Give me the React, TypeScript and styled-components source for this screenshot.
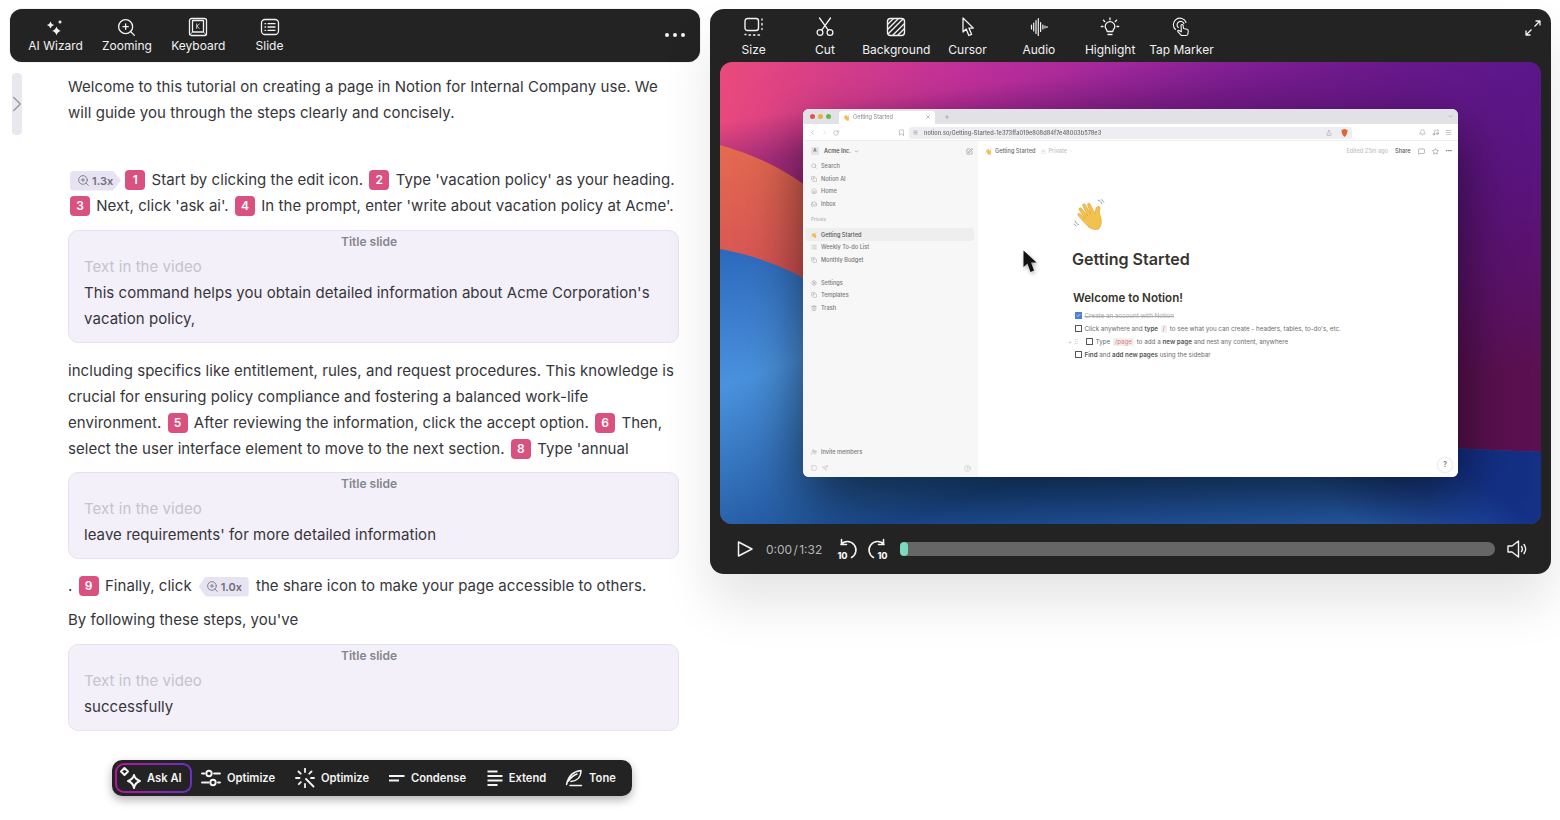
import React from 'react';
import styled, { createGlobalStyle, css } from 'styled-components';
import {
  Bell,
  Bookmark,
  Check,
  ChevronDown,
  ChevronLeft,
  ChevronRight,
  CircleHelp,
  Copy,
  Home,
  Inbox,
  List,
  Lock,
  Menu,
  MessageSquare,
  Music,
  Plus,
  RotateCw,
  Search,
  Send,
  Settings,
  Share,
  SlidersHorizontal,
  Square,
  SquarePen,
  Star,
  Trash2,
  UserPlus,
  X,
  ZoomIn,
} from 'lucide-react';

const GlobalStyle = createGlobalStyle`
  html, body {
    margin: 0;
    padding: 0;
    background: #fff;
    font-family: Inter, "Liberation Sans", sans-serif;
    overflow: hidden;
  }
  * { box-sizing: border-box; }
`;

const Page = styled.div`
  width: 1560px;
  height: 820px;
  display: flex;
  align-items: flex-start;
  padding: 9px 0 0 10px;
  gap: 10px;
`;

const LeftColumn = styled.section`
  width: 690px;
  display: flex;
  flex-direction: column;
`;

const DarkBar = styled.div`
  background: #232323;
  border-radius: 12px;
  height: 53px;
  display: flex;
  align-items: flex-start;
  padding: 8px 10px 0;
  box-shadow: 0 0 1px rgba(0, 0, 0, 0.5);
`;

const ToolItem = styled.div<{ $labelGap?: number }>`
  width: 71.3px;
  display: flex;
  flex-direction: column;
  align-items: center;
  gap: ${(p) => p.$labelGap ?? 1}px;
  color: #f2f2f2;
  font-size: 12px;
  line-height: 16px;
  white-space: nowrap;
  svg { display: block; }
`;

const IconSlot = styled.div`
  height: 20px;
  display: flex;
  align-items: center;
  justify-content: center;
`;

const MoreDots = styled.div`
  margin-left: auto;
  margin-right: 5px;
  margin-top: 16px;
  display: flex;
  gap: 4px;
  span {
    width: 4px;
    height: 4px;
    border-radius: 50%;
    background: #f2f2f2;
  }
`;

const ContentRow = styled.div`
  display: flex;
  gap: 46px;
  padding: 11px 0 0 2px;
`;

const Handle = styled.div`
  width: 10px;
  height: 62px;
  flex: none;
  background: #e8e9ef;
  border-radius: 4px;
  display: flex;
  align-items: center;
  justify-content: center;
  color: #94949b;
  svg { flex: none; }
`;

const TextColumn = styled.div`
  width: 611px;
  padding-top: 1px;
  color: #36363a;
  font-size: 15px;
  line-height: 26px;
  letter-spacing: 0.05px;
`;

const Para = styled.p<{ $top?: number }>`
  margin: ${(p) => p.$top ?? 0}px 0 0;
  white-space: nowrap;
`;

const Step = styled.span`
  display: inline-flex;
  align-items: center;
  justify-content: center;
  width: 20px;
  height: 20px;
  margin: -3px 2px;
  border-radius: 4px;
  background: #d9527f;
  color: #fff;
  font-size: 12px;
  font-weight: 600;
  line-height: 20px;
  vertical-align: 1px;
  letter-spacing: 0;
`;

const ZoomTag = styled.span<{ $dir: 'left' | 'right' }>`
  display: inline-flex;
  align-items: center;
  gap: 2px;
  height: 20px;
  background: #e7e3f3;
  color: #6f6f78;
  font-size: 11px;
  font-weight: 600;
  line-height: 20px;
  vertical-align: -2px;
  letter-spacing: 0;
  ${(p) =>
    p.$dir === 'right'
      ? css`
          width: 51px;
          padding-left: 7px;
          margin: -3px -2px -3px 2px;
          border-radius: 4px 0 0 4px;
          clip-path: polygon(0 0, 43px 0, 100% 50%, 43px 100%, 0 100%);
        `
      : css`
          width: 50px;
          padding-left: 7px;
          margin: -3px 3px -3px 7px;
          border-radius: 0 4px 4px 0;
          clip-path: polygon(7px 0, 100% 0, 100% 100%, 7px 100%, 0 50%);
        `}
`;

const SlideCard = styled.div<{ $top?: number }>`
  margin-top: ${(p) => p.$top ?? 11}px;
  padding: 0 15px 10px;
  background: #f3f0fa;
  border: 1px solid #e5e1f1;
  border-radius: 10px;
`;

const CardTitle = styled.div`
  text-align: center;
  padding-right: 9px;
  color: #85858c;
  font-size: 12px;
  font-weight: 600;
  line-height: 22px;
  letter-spacing: 0;
`;

const CardHint = styled.div`
  color: #c4c4c9;
  margin-top: 1px;
`;

const FloatingBar = styled.div`
  align-self: flex-start;
  margin: 29px 0 0 102px;
  width: 520px;
  height: 36px;
  background: #232323;
  border-radius: 10px;
  box-shadow: 0 4px 10px rgba(0, 0, 0, 0.3);
  display: flex;
  align-items: center;
  padding: 0 3px;
  color: #f4f4f4;
  font-size: 11.2px;
  font-weight: 600;
  letter-spacing: 0;
`;

const AskButton = styled.div`
  width: 77px;
  height: 30px;
  border: 2px solid transparent;
  border-radius: 9px;
  background: linear-gradient(#232323, #232323) padding-box,
    linear-gradient(90deg, #b5179e, #6d2fc4) border-box;
  display: flex;
  align-items: center;
  gap: 4px;
  padding-left: 2px;
  flex: none;
`;

const FloatAction = styled.div<{ $w: number }>`
  width: ${(p) => p.$w}px;
  flex: none;
  display: flex;
  align-items: center;
  justify-content: center;
  gap: 6px;
  white-space: nowrap;
`;

const PlayerPanel = styled.section`
  width: 841px;
  height: 565px;
  background: #232323;
  border-radius: 14px;
  display: flex;
  flex-direction: column;
  box-shadow: 0 30px 50px rgba(0, 0, 0, 0.1);
`;

const PlayerTop = styled.div`
  height: 53px;
  display: flex;
  align-items: flex-start;
  padding: 8px 10px 0 8px;
  flex: none;
`;

const ExpandCorner = styled.div`
  margin-left: auto;
  margin-top: 3px;
  color: #f2f2f2;
`;

const VideoFrame = styled.div`
  position: relative;
  height: 462px;
  flex: none;
  margin: 0 10px;
  border-radius: 12px;
  overflow: hidden;
  padding: 47px 83px;
  svg.wall {
    position: absolute;
    inset: 0;
  }
`;

const BrowserWindow = styled.div`
  position: relative;
  height: 368px;
  border-radius: 6px;
  overflow: hidden;
  background: #fff;
  box-shadow: 0 24px 60px rgba(0, 0, 0, 0.6);
  color: #6c6c6c;
  font-size: 5.6px;
  line-height: 8px;
  letter-spacing: 0;
  filter: blur(0.25px);
  display: flex;
  flex-direction: column;
`;

const TabStrip = styled.div`
  height: 15px;
  flex: none;
  background: #e2e2e6;
  display: flex;
  align-items: center;
  padding: 0 5px 0 7px;
  gap: 3px;
`;

const Light = styled.i<{ $c: string }>`
  width: 5px;
  height: 5px;
  border-radius: 50%;
  background: ${(p) => p.$c};
`;

const BrowserTab = styled.div`
  width: 96px;
  height: 13px;
  margin: 1px 6px 0 5px;
  background: #fff;
  border-radius: 3px 3px 0 0;
  display: flex;
  align-items: center;
  gap: 3px;
  padding: 0 4px;
  color: #888;
  svg:last-child { margin-left: auto; color: #555; }
`;

const UrlRow = styled.div`
  height: 17px;
  flex: none;
  background: #fff;
  border-bottom: 1px solid #eee;
  display: flex;
  align-items: center;
  padding: 1px 6px 0;
  color: #777;
`;

const NavIcons = styled.div`
  width: 100px;
  display: flex;
  align-items: center;
  gap: 5px;
  flex: none;
  svg:last-child { margin-left: auto; margin-right: 4px; }
`;

const UrlField = styled.div`
  width: 443px;
  height: 12px;
  background: #eeeef2;
  border-radius: 3px;
  display: flex;
  align-items: center;
  gap: 6px;
  padding: 0 4px;
  font-weight: 600;
  color: #777;
  svg:nth-of-type(2) { margin-left: auto; margin-right: 3px; }
`;

const BrowserRight = styled.div`
  margin-left: auto;
  display: flex;
  gap: 6px;
`;

const NotionArea = styled.div`
  flex: 1;
  display: flex;
  min-height: 0;
`;

const NotionSide = styled.aside`
  width: 175px;
  flex: none;
  background: #f7f7f7;
  padding: 3px 4px 2px 2px;
  display: flex;
  flex-direction: column;
`;

const SideRow = styled.div<{ $active?: boolean; $strong?: boolean }>`
  height: 12.7px;
  flex: none;
  display: flex;
  align-items: center;
  gap: 4px;
  padding-left: 6px;
  border-radius: 3px;
  font-weight: 500;
  color: ${(p) => (p.$strong ? '#555' : '#777')};
  background: ${(p) => (p.$active ? '#eeeeee' : 'transparent')};
  svg { flex: none; color: #888; }
`;

const SideLabel = styled.div`
  margin: 6px 0 0 6px;
  height: 12px;
  font-size: 4.6px;
  color: #aaa;
`;

const SideHead = styled.div`
  height: 14px;
  flex: none;
  display: flex;
  align-items: center;
  gap: 3px;
  padding-left: 6px;
  color: #555;
  font-weight: 600;
  margin-bottom: 1.6px;
  svg:last-child { margin-left: auto; margin-right: 1px; color: #555; }
`;

const AcmeMark = styled.span`
  width: 8px;
  height: 8px;
  margin-right: 2px;
  border-radius: 1px;
  background: #e5e5e5;
  color: #666;
  text-align: center;
  font-size: 4.5px;
`;

const SideGap = styled.div<{ $h?: number }>`
  flex: ${(p) => (p.$h ? 'none' : 1)};
  height: ${(p) => p.$h ?? 0}px;
`;

const SideFoot = styled.div`
  height: 14px;
  flex: none;
  display: flex;
  align-items: center;
  gap: 5px;
  padding: 0 3px 0 6px;
  color: #aaa;
  svg:last-child { margin-left: auto; }
`;

const NotionMain = styled.main`
  position: relative;
  flex: 1;
  background: #fff;
  display: flex;
  flex-direction: column;
`;

const NotionHeader = styled.div`
  height: 20px;
  flex: none;
  display: flex;
  align-items: center;
  padding: 0 6px 0 7px;
  gap: 3px;
  font-weight: 500;
  svg { flex: none; }
`;

const Muted = styled.span`
  color: #c2c2c2;
  display: inline-flex;
  align-items: center;
  gap: 2px;
  margin-left: 3px;
`;

const HeaderRight = styled.div`
  margin-left: auto;
  display: flex;
  align-items: center;
  gap: 7px;
  color: #555;
`;

const TinyDots = styled.span`
  font-size: 4px;
`;

const Doc = styled.article`
  padding: 37px 0 0 95px;
  color: #6a6a6a;
  font-size: 6.25px;
`;

const DocTitle = styled.h1`
  margin: 16px 0 0 -1px;
  font-size: 16.1px;
  line-height: 24px;
  font-weight: 600;
  color: #37352f;
`;

const DocHeading = styled.h2`
  margin: 19px 0 3px;
  font-size: 11.6px;
  line-height: 16px;
  font-weight: 600;
  color: #37352f;
`;

const Todo = styled.div<{ $indent?: boolean; $done?: boolean }>`
  position: relative;
  height: 13px;
  display: flex;
  align-items: center;
  gap: 3px;
  margin-left: ${(p) => (p.$indent ? 13 : 2)}px;
  white-space: nowrap;
  color: ${(p) => (p.$done ? '#aaa' : '#6a6a6a')};
  text-decoration: ${(p) => (p.$done ? 'line-through' : 'none')};
  b { font-weight: 600; color: #555; }
`;

const TodoBox = styled.span<{ $checked?: boolean }>`
  width: 6.5px;
  height: 6.5px;
  flex: none;
  display: flex;
  align-items: center;
  justify-content: center;
  color: #fff;
  border: 0.8px solid ${(p) => (p.$checked ? '#4a7fd6' : '#555')};
  border-radius: 0.5px;
  background: ${(p) => (p.$checked ? '#4a7fd6' : 'transparent')};
  svg { flex: none; }
`;

const Code = styled.span`
  background: #f1f1ef;
  color: #d77;
  padding: 0 2px;
  border-radius: 1px;
  margin: 0 1px;
`;

const RowGrip = styled.span`
  position: absolute;
  left: -18px;
  color: #bbb;
  font-size: 6px;
`;

const HelpBubble = styled.div`
  position: absolute;
  right: 6px;
  bottom: 5px;
  width: 14px;
  height: 14px;
  border-radius: 50%;
  background: #fff;
  box-shadow: 0 0 3px rgba(0, 0, 0, 0.2);
  text-align: center;
  font-size: 7px;
  line-height: 14px;
  color: #444;
`;

const CursorMark = styled.svg`
  position: absolute;
  left: 45px;
  top: 109px;
  filter: drop-shadow(1px 2px 2px rgba(0, 0, 0, 0.35));
`;

const Controls = styled.div`
  flex: 1;
  display: flex;
  align-items: center;
  padding: 0 24px 0 26px;
  color: #f2f2f2;
  svg { flex: none; }
`;

const TimeText = styled.span`
  margin: 0 13px 0 12px;
  font-size: 12px;
  color: #b5b5b5;
  width: 56px;
  white-space: nowrap;
  word-spacing: -2px;
`;

const SkipGap = styled.span`
  width: 7px;
  flex: none;
`;

const Track = styled.div`
  flex: 1;
  height: 14px;
  margin: 0 12px 0 10px;
  border-radius: 7px;
  background: #666;
`;

const TrackFill = styled.div`
  height: 100%;
  border-radius: 4px;
  background: #7dd9c0;
`;

/* ---- drawings ---- */

const stroke = {
  fill: 'none',
  stroke: 'currentColor',
  strokeWidth: 1.5,
  strokeLinecap: 'round' as const,
  strokeLinejoin: 'round' as const,
};

const Sparkle = ({ cx, cy, r }: { cx: number; cy: number; r: number }) => (
  <path
    d={`M${cx} ${cy - r}Q${cx + r * 0.2} ${cy - r * 0.2} ${cx + r} ${cy}Q${cx + r * 0.2} ${cy + r * 0.2} ${cx} ${cy + r}Q${cx - r * 0.2} ${cy + r * 0.2} ${cx - r} ${cy}Q${cx - r * 0.2} ${cy - r * 0.2} ${cx} ${cy - r}Z`}
    fill="currentColor"
  />
);

const WizardIcon = () => (
  <svg width="20" height="20" viewBox="0 0 20 20">
    <Sparkle cx={4.5} cy={8} r={3.6} />
    <Sparkle cx={10.5} cy={14} r={4.4} />
    <Sparkle cx={14} cy={5} r={2.2} />
  </svg>
);

const KeyboardIcon = () => (
  <svg width="20" height="20" viewBox="0 0 20 20" {...stroke} strokeWidth={1.3}>
    <rect x="1.5" y="1.5" width="17" height="17" rx="2" />
    <rect x="4.5" y="3.5" width="11" height="11.5" rx="0.5" />
    <path d="M1.8 18l2.7-3M18.2 18l-2.7-3M8.7 7v4.4M11.3 7L8.9 9.2l2.4 2.2" strokeWidth={0.8} />
  </svg>
);

const SlideIcon = () => (
  <svg width="20" height="20" viewBox="0 0 20 20" {...stroke} strokeWidth={1.3}>
    <rect x="1.5" y="2.5" width="17" height="15" rx="3.5" />
    <path d="M5 6.7h.6M5 10h.6M5 13.3h.6M8 6.7h7M8 10h7M8 13.3h7" />
  </svg>
);

const SizeIcon = () => (
  <svg width="20" height="20" viewBox="0 0 20 20" {...stroke} strokeWidth={1.4}>
    <rect x="1" y="1.5" width="13.5" height="12" rx="2.5" />
    <path d="M18 2v1M18 6.5v1.5M18 11.5v1M1 17.5h1M5 18h1.5M9.5 18h1.5M14 18h1.5" />
  </svg>
);

const CutIcon = () => (
  <svg width="20" height="20" viewBox="0 0 20 20" {...stroke} strokeWidth={1.3}>
    <circle cx="5" cy="15.5" r="2.9" />
    <circle cx="15" cy="15.5" r="2.9" />
    <path d="M6.7 13.2L15.5 1M13.3 13.2L4.5 1" />
  </svg>
);

const BackgroundIcon = () => (
  <svg width="20" height="20" viewBox="0 0 20 20" {...stroke} strokeWidth={1.4}>
    <rect x="1.5" y="1.5" width="17" height="17" rx="3" />
    <path d="M2 7L7 2M2 12L12 2M2.5 16.5L16.5 2.5M7 18L18 7M12 18l6-6" />
  </svg>
);

const CursorIcon = () => (
  <svg width="20" height="20" viewBox="0 0 20 20" {...stroke} strokeWidth={1.3}>
    <path d="M5 1v14l3.200-3 2.600 6.500 2.800-1.200-2.700-6.200h4.500L5 1z" />
  </svg>
);

const AudioIcon = () => (
  <svg width="20" height="20" viewBox="0 0 20 20" {...stroke} strokeWidth={1.2}>
    <path d="M2.500 8v4M4.700 6v8M7 3.500v13M9.300 1.500v17M11.600 5.500v9M13.900 8v4M16 9v2M18 9.500v1" />
  </svg>
);

const BulbIcon = () => (
  <svg width="20" height="20" viewBox="0 0 20 20" {...stroke} strokeWidth={1.3}>
    <path d="M7.200 14.500c0-2-2-2.700-2-5a4.800 4.800 0 019.600 0c0 2.300-2 3-2 5h-5.600zM8 17.500h4M10 1v1.800M3.400 3.200l1.300 1.300M16.600 3.200l-1.300 1.300M1.300 9.500h1.700M17 9.500h1.700" />
  </svg>
);

const TapIcon = () => (
  <svg width="20" height="20" viewBox="0 0 20 20" {...stroke} strokeWidth={1.1}>
    <path d="M4.500 12.500a6.500 6.500 0 1 1 10.500-7M7.300 10.500a3.500 3.500 0 1 1 5.600-3.800" />
    <path d="M10 8.300a1.100 1.100 0 012.100 0l.4 3.200 3.500.7c1 .3 1.500 1 1.300 2l-.5 3c-.2.900-.9 1.300-1.700 1.300h-3.800c-.6 0-1.100-.2-1.500-.7L6.800 14.700c-.5-.7.300-1.700 1.200-1.200l2.400 1.300z" />
  </svg>
);

const ExpandIcon = () => (
  <svg width="16" height="16" viewBox="0 0 16 16" {...stroke} strokeWidth={1.3} strokeLinecap="butt">
    <path d="M9.500 6.500L15 1M10.500 1H15v4.500M6.500 9.500L1 15M1 10.500V15h4.500" />
  </svg>
);

const AskIcon = () => (
  <svg width="24" height="24" viewBox="0 0 24 24" {...stroke} strokeWidth={2}>
    <path d="M5.500 2L9 5.500 5.500 9 2 5.500z" />
    <path d="M15 9c.6 3 2 4.500 6 6-4 1.500-5.400 3-6 7-.6-4-2-5.500-6-7 4-1.500 5.400-3 6-6z" />
  </svg>
);

const SliderIcon = () => (
  <svg width="20" height="20" viewBox="0 0 20 20" {...stroke} strokeWidth={1.9}>
    <circle cx="8" cy="5.500" r="2.700" />
    <circle cx="12" cy="14.500" r="2.700" />
    <path d="M1 5.500h2.500M13 5.500h6M1 14.500h6.500M17 14.500h2" />
  </svg>
);

const RaysIcon = () => (
  <svg width="20" height="20" viewBox="0 0 20 20" {...stroke} strokeWidth={1.8}>
    <path d="M10 0.500v3.500M10 16v3.500M1 10h3.500M16 10h3M3.500 3.500l2.200 2.200M16.500 3.500l-2.200 2.200M3.800 16.200l2-2M11 11l7.500 7.500" />
  </svg>
);

const CondenseIcon = () => (
  <svg width="16" height="16" viewBox="0 0 16 16" {...stroke} strokeWidth={1.8} strokeLinecap="butt">
    <path d="M0 6h15.500M0 10.500h10" />
  </svg>
);

const ExtendIcon = () => (
  <svg width="16" height="16" viewBox="0 0 16 16" {...stroke} strokeWidth={1.8} strokeLinecap="butt">
    <path d="M0.500 1.500h10M0.500 6h15M0.500 10.500h15M0.500 15h10" />
  </svg>
);

const FeatherIcon = () => (
  <svg width="18" height="18" viewBox="0 0 18 18" {...stroke} strokeWidth={1.5}>
    <path d="M1.500 15.500C3 8 7 2.500 16 1.500 16 8 12 12 6 12.500M3.500 12C6 8.500 9 6 12 5M5 16.500h11.500" />
  </svg>
);

const PlayIcon = () => (
  <svg width="18" height="18" viewBox="0 0 18 18" {...stroke} strokeWidth={1.5}>
    <path d="M2.500 2L16 9 2.500 16z" />
  </svg>
);

const SkipIcon = ({ flip }: { flip?: boolean }) => (
  <svg width="24" height="24" viewBox="0 0 24 24" fill="none">
    <g {...stroke} strokeWidth={1.6} transform={flip ? 'matrix(-1 0 0 1 24 0)' : undefined}>
      <path d="M6 7.500a8.500 8.500 0 1 1 10.500 13M6.500 2.500v5h5" />
    </g>
    <text
      x={flip ? 16.5 : 7.5}
      y="22"
      fontSize="9"
      fontWeight="800"
      fill="currentColor"
      textAnchor="middle"
      fontFamily="Inter, sans-serif"
    >
      10
    </text>
  </svg>
);

const VolumeIcon = () => (
  <svg width="20" height="20" viewBox="0 0 20 20" {...stroke} strokeWidth={1.4}>
    <path d="M1 7v6h4l6.500 5V2L5 7z" />
    <path d="M14.500 7.500c1 1.500 1 3.500 0 5M17 5.500c2 2.700 2 6.300 0 9" />
  </svg>
);

const WaveHand = ({ size }: { size: number }) => (
  <svg width={size} height={size} viewBox="0 0 32 32" style={{ display: 'block', flex: 'none' }}>
    <path
      d="M25 30c-5 1.500-9-.5-12-4L5 17c-1-1.200.6-2.800 1.900-1.700l5 4.700L6 11.500c-.9-1.300.8-2.800 2-1.600l6.300 7.600L9.500 7.500c-.7-1.500 1.200-2.500 2.200-1.300l5.300 9-2.800-8.500c-.4-1.500 1.500-2.300 2.300-1l4.500 9 1-3.500c.4-2.700 3-3.800 4-2.500.5 1-.4 3-.4 5 0 3 2.300 5 1.800 10-.3 3-1.400 5.700-2.600 6.300z"
      fill="#f2c14e"
      stroke="#d9a033"
      strokeWidth="0.6"
    />
    <path d="M24 2c2 .6 3.500 2 4.200 4M27 1.500c1.500.6 2.500 1.600 3 3M2 22c.5 1.800 1.800 3.300 3.800 4M1 25c.6 1 1.400 1.800 2.500 2.300" fill="none" stroke="#888" strokeWidth="0.8" />
  </svg>
);

const Wallpaper = () => (
  <svg className="wall" width="822" height="462" viewBox="0 0 822 462" preserveAspectRatio="none">
    <defs>
      <linearGradient id="topGrad" x1="0" y1="0" x2="1" y2="0.1">
        <stop offset="0" stopColor="#ea4a7c" />
        <stop offset="0.3" stopColor="#c0309a" />
        <stop offset="0.62" stopColor="#8a229c" />
        <stop offset="1" stopColor="#5a1c9e" />
      </linearGradient>
      <linearGradient id="topShade" gradientUnits="userSpaceOnUse" x1="420" y1="0" x2="480" y2="420">
        <stop offset="0" stopColor="#5a1070" stopOpacity="0" />
        <stop offset="0.1" stopColor="#5a1070" stopOpacity="0.4" />
        <stop offset="0.4" stopColor="#5a1070" stopOpacity="0.7" />
        <stop offset="0.85" stopColor="#5a0f48" stopOpacity="0.9" />
      </linearGradient>
      <linearGradient id="orange" x1="0" y1="0" x2="0" y2="1">
        <stop offset="0" stopColor="#e46a50" />
        <stop offset="1" stopColor="#cf4658" />
      </linearGradient>
      <linearGradient id="blue" x1="0" y1="0" x2="1" y2="1">
        <stop offset="0" stopColor="#2c68bc" />
        <stop offset="0.25" stopColor="#4a92de" />
        <stop offset="0.6" stopColor="#1c4f96" />
        <stop offset="1" stopColor="#2c66ba" />
      </linearGradient>
      <linearGradient id="blueShade" gradientUnits="userSpaceOnUse" x1="720" y1="385" x2="650" y2="470">
        <stop offset="0" stopColor="#10287e" stopOpacity="0.85" />
        <stop offset="1" stopColor="#10287e" stopOpacity="0" />
      </linearGradient>
    </defs>
    <rect width="822" height="462" fill="url(#topGrad)" />
    <rect width="822" height="462" fill="url(#topShade)" />
    <path d="M0 83C50 97 90 120 140 170L280 300H0z" fill="url(#orange)" />
    <path d="M0 187C60 198 110 225 180 280C300 360 560 380 821 390V462H0z" fill="url(#blue)" />
    <path d="M0 187C60 198 110 225 180 280C300 360 560 380 821 390V462H0z" fill="url(#blueShade)" />
  </svg>
);

const i5 = { size: 6, strokeWidth: 1.5 };
const i7 = { size: 7, strokeWidth: 1.4 };

function NotionWindow() {
  return (
    <BrowserWindow>
      <TabStrip>
        <Light $c="#e0554d" />
        <Light $c="#e9b23f" />
        <Light $c="#62b84f" />
        <BrowserTab>
          <WaveHand size={7} />
          Getting Started
          <X {...i5} />
        </BrowserTab>
        <Plus size={6} strokeWidth={1.5} color="#777" />
        <ChevronDown size={5} style={{ marginLeft: 'auto' }} color="#777" />
      </TabStrip>
      <UrlRow>
        <NavIcons>
          <ChevronLeft {...i7} />
          <ChevronRight {...i7} color="#bbb" />
          <RotateCw {...i5} />
          <Bookmark {...i7} />
        </NavIcons>
        <UrlField>
          <SlidersHorizontal size={5} strokeWidth={1.5} />
          notion.so/Getting-Started-1e373ffa019e808d84f7e48003b578e3
          <Share size={6} strokeWidth={1.5} />
          <svg width="7" height="8" viewBox="0 0 7 8">
            <path d="M0.500 1L3.500 0 6.500 1C6.500 4 5.500 6.500 3.500 8 1.500 6.500 .5 4 .5 1z" fill="#e2642f" />
          </svg>
        </UrlField>
        <BrowserRight>
          <Bell {...i7} />
          <Music {...i7} />
          <Menu {...i7} />
        </BrowserRight>
      </UrlRow>
      <NotionArea>
        <NotionSide>
          <SideHead>
            <AcmeMark>A</AcmeMark>
            Acme Inc.
            <ChevronDown size={5} />
            <SquarePen {...i7} />
          </SideHead>
          <SideRow><Search {...i5} />Search</SideRow>
          <SideRow><Copy {...i5} />Notion AI</SideRow>
          <SideRow><Home {...i5} />Home</SideRow>
          <SideRow><Inbox {...i5} />Inbox</SideRow>
          <SideLabel>Private</SideLabel>
          <SideRow $active $strong><WaveHand size={6} />Getting Started</SideRow>
          <SideRow><List {...i5} />Weekly To-do List</SideRow>
          <SideRow><Copy {...i5} />Monthly Budget</SideRow>
          <SideGap $h={10} />
          <SideRow><Settings {...i5} />Settings</SideRow>
          <SideRow><Copy {...i5} />Templates</SideRow>
          <SideRow><Trash2 {...i5} />Trash</SideRow>
          <SideGap />
          <SideRow><UserPlus {...i5} />Invite members</SideRow>
          <SideGap $h={3} />
          <SideFoot>
            <Square {...i5} />
            <Send {...i5} />
            <CircleHelp {...i7} />
          </SideFoot>
        </NotionSide>
        <NotionMain>
          <NotionHeader>
            <WaveHand size={7} />
            Getting Started
            <Muted><Lock size={5} strokeWidth={1.5} />Private<ChevronDown size={4} /></Muted>
            <HeaderRight>
              <Muted>Edited 25m ago</Muted>
              <span>Share</span>
              <MessageSquare {...i7} />
              <Star {...i7} />
              <TinyDots>•••</TinyDots>
            </HeaderRight>
          </NotionHeader>
          <Doc>
            <WaveHand size={33} />
            <DocTitle>Getting Started</DocTitle>
            <DocHeading>Welcome to Notion!</DocHeading>
            <Todo $done>
              <TodoBox $checked><Check size={5} strokeWidth={3} /></TodoBox>
              Create an account with Notion
            </Todo>
            <Todo>
              <TodoBox />
              <span>Click anywhere and <b>type</b> <Code>/</Code> to see what you can create - headers, tables, to-do's, etc.</span>
            </Todo>
            <Todo $indent>
              <RowGrip>+ ⠿</RowGrip>
              <TodoBox />
              <span>Type <Code>/page</Code> to add a <b>new page</b> and nest any content, anywhere</span>
            </Todo>
            <Todo>
              <TodoBox />
              <span><b>Find</b> and <b>add new pages</b> using the sidebar</span>
            </Todo>
          </Doc>
          <HelpBubble>?</HelpBubble>
          <CursorMark width="14" height="23" viewBox="0 0 14 23">
            <path d="M0.500 0.500V17L4.500 13.500 7.500 22 11 20.500 8 12.500H13.500z" fill="#111" />
          </CursorMark>
        </NotionMain>
      </NotionArea>
    </BrowserWindow>
  );
}

const leftTools = [
  { label: 'AI Wizard', icon: <WizardIcon /> },
  { label: 'Zooming', icon: <ZoomIn size={21} strokeWidth={1.5} /> },
  { label: 'Keyboard', icon: <KeyboardIcon /> },
  { label: 'Slide', icon: <SlideIcon /> },
];

const playerTools = [
  { label: 'Size', icon: <SizeIcon /> },
  { label: 'Cut', icon: <CutIcon /> },
  { label: 'Background', icon: <BackgroundIcon /> },
  { label: 'Cursor', icon: <CursorIcon /> },
  { label: 'Audio', icon: <AudioIcon /> },
  { label: 'Highlight', icon: <BulbIcon /> },
  { label: 'Tap Marker', icon: <TapIcon /> },
];

const floatActions = [
  { label: 'Optimize', icon: <SliderIcon />, w: 92 },
  { label: 'Optimize', icon: <RaysIcon />, w: 96 },
  { label: 'Condense', icon: <CondenseIcon />, w: 95 },
  { label: 'Extend', icon: <ExtendIcon />, w: 83 },
  { label: 'Tone', icon: <FeatherIcon />, w: 65 },
];

export default function App() {
  return (
    <>
      <GlobalStyle />
      <Page>
        <LeftColumn>
          <DarkBar>
            {leftTools.map((t) => (
              <ToolItem key={t.label}>
                <IconSlot>{t.icon}</IconSlot>
                {t.label}
              </ToolItem>
            ))}
            <MoreDots>
              <span />
              <span />
              <span />
            </MoreDots>
          </DarkBar>
          <ContentRow>
            <Handle>
              <ChevronRight size={26} strokeWidth={1.2} />
            </Handle>
            <TextColumn>
              <Para>
                Welcome to this tutorial on creating a page in Notion for Internal Company use. We
                <br />
                will guide you through the steps clearly and concisely.
              </Para>
              <Para $top={41}>
                <ZoomTag $dir="right">
                  <ZoomIn size={13} strokeWidth={1.5} />
                  1.3x
                </ZoomTag>{' '}
                <Step>1</Step> Start by clicking the edit icon. <Step>2</Step> Type 'vacation policy' as your heading.
                <br />
                <Step>3</Step> Next, click 'ask ai'. <Step>4</Step> In the prompt, enter 'write about vacation policy at Acme'.
              </Para>
              <SlideCard>
                <CardTitle>Title slide</CardTitle>
                <CardHint>Text in the video</CardHint>
                This command helps you obtain detailed information about Acme Corporation's
                <br />
                vacation policy,
              </SlideCard>
              <Para $top={15}>
                including specifics like entitlement, rules, and request procedures. This knowledge is
                <br />
                crucial for ensuring policy compliance and fostering a balanced work-life
                <br />
                environment. <Step>5</Step> After reviewing the information, click the accept option. <Step>6</Step> Then,
                <br />
                select the user interface element to move to the next section. <Step>8</Step> Type 'annual
              </Para>
              <SlideCard $top={10}>
                <CardTitle>Title slide</CardTitle>
                <CardHint>Text in the video</CardHint>
                leave requirements' for more detailed information
              </SlideCard>
              <Para $top={14}>
                . <Step>9</Step> Finally, click
                <ZoomTag $dir="left">
                  <ZoomIn size={13} strokeWidth={1.5} />
                  1.0x
                </ZoomTag>{' '}
                the share icon to make your page accessible to others.
              </Para>
              <Para $top={8}>By following these steps, you've</Para>
              <SlideCard>
                <CardTitle>Title slide</CardTitle>
                <CardHint>Text in the video</CardHint>
                successfully
              </SlideCard>
            </TextColumn>
          </ContentRow>
          <FloatingBar>
            <AskButton>
              <AskIcon />
              Ask AI
            </AskButton>
            {floatActions.map((a, i) => (
              <FloatAction key={i} $w={a.w}>
                {a.icon}
                {a.label}
              </FloatAction>
            ))}
          </FloatingBar>
        </LeftColumn>

        <PlayerPanel>
          <PlayerTop>
            {playerTools.map((t) => (
              <ToolItem key={t.label} $labelGap={5}>
                <IconSlot>{t.icon}</IconSlot>
                {t.label}
              </ToolItem>
            ))}
            <ExpandCorner>
              <ExpandIcon />
            </ExpandCorner>
          </PlayerTop>
          <VideoFrame>
            <Wallpaper />
            <NotionWindow />
          </VideoFrame>
          <Controls>
            <PlayIcon />
            <TimeText>0:00 / 1:32</TimeText>
            <SkipIcon />
            <SkipGap />
            <SkipIcon flip />
            <Track>
              <TrackFill style={{ width: `${(8 / 595) * 100}%` }} />
            </Track>
            <VolumeIcon />
          </Controls>
        </PlayerPanel>
      </Page>
    </>
  );
}
